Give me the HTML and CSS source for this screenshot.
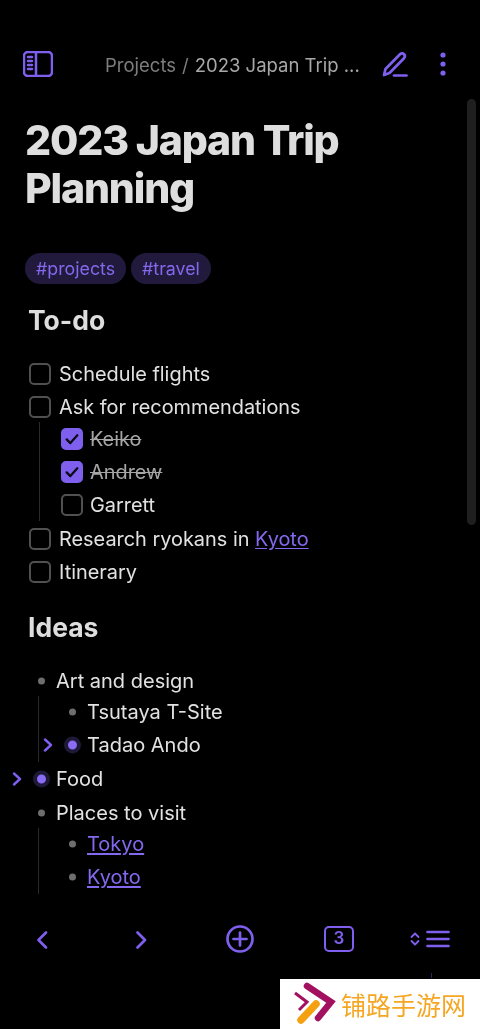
FILE: index.html
```html
<!DOCTYPE html>
<html lang="en">
<head>
<meta charset="utf-8">
<title>2023 Japan Trip Planning</title>
<link rel="stylesheet" href="styles.css">
</head>
<body>
<div class="app">
  <header class="topbar">
    <svg class="icon sidebar-icon" viewBox="0 0 30 26" fill="none"><rect x="1" y="1" width="28" height="24" rx="4"/><path d="M13 1v24M5 6h4M5 10h4M5 14h4M5 18h4" /></svg>
    <div class="crumbs"><span class="crumb-parent">Projects</span><span class="crumb-sep">/</span><span class="crumb-title">2023 Japan Trip ...</span></div>
    <svg class="icon pen-icon" viewBox="0 0 26 26" fill="none"><path d="M2 24l1.500-6L18 3.200c1.200-1.200 3-1.200 4 0 1 1 1 2.800 0 4L7.500 22z"/><path d="M12 24.500h12.500"/></svg>
    <svg class="more-icon" viewBox="0 0 6 24"><circle cx="3" cy="3" r="2.600"/><circle cx="3" cy="12" r="2.600"/><circle cx="3" cy="21" r="2.600"/></svg>
  </header>

  <main class="note">
    <h1>2023 Japan Trip Planning</h1>
    <div class="tags"><span class="tag">#projects</span><span class="tag">#travel</span></div>

    <h2 class="todo-h">To-do</h2>
    <ul class="tasks">
      <li class="task"><span class="box"></span>Schedule flights</li>
      <li class="task"><span class="box"></span>Ask for recommendations</li>
      <li>
        <ul class="tasks nested">
          <li class="task done"><span class="box checked"><svg viewBox="0 0 22 22" fill="none"><path d="M4.500 11.500l4.500 4.500 8.500-9.500"/></svg></span><s>Keiko</s></li>
          <li class="task done"><span class="box checked"><svg viewBox="0 0 22 22" fill="none"><path d="M4.500 11.500l4.500 4.500 8.500-9.500"/></svg></span><s>Andrew</s></li>
          <li class="task"><span class="box"></span>Garrett</li>
        </ul>
      </li>
      <li class="task"><span class="box"></span>Research ryokans in&nbsp;<a href="#">Kyoto</a></li>
      <li class="task"><span class="box"></span>Itinerary</li>
    </ul>

    <h2 class="ideas-h">Ideas</h2>
    <ul class="bullets">
      <li class="bullet"><span class="dot"></span>Art and design</li>
      <li>
        <ul class="bullets nested">
          <li class="bullet"><span class="dot"></span>Tsutaya T-Site</li>
          <li class="bullet folded"><svg class="chev" viewBox="0 0 10 14" fill="none"><path d="M2 1.500L8 7l-6 5.500"/></svg><span class="dot"></span>Tadao Ando</li>
        </ul>
      </li>
      <li class="bullet folded"><svg class="chev" viewBox="0 0 10 14" fill="none"><path d="M2 1.500L8 7l-6 5.500"/></svg><span class="dot"></span>Food</li>
      <li class="bullet"><span class="dot"></span>Places to visit</li>
      <li>
        <ul class="bullets nested">
          <li class="bullet"><span class="dot"></span><a href="#">Tokyo</a></li>
          <li class="bullet"><span class="dot"></span><a href="#">Kyoto</a></li>
        </ul>
      </li>
    </ul>
  </main>

  <nav class="bottombar">
    <svg class="icon nav-icon" viewBox="0 0 14 20" fill="none"><path d="M11 2.500L3.500 10l7.500 7.500"/></svg>
    <svg class="icon nav-icon" viewBox="0 0 14 20" fill="none"><path d="M3.500 2.500L11 10l-7.500 7.500"/></svg>
    <svg class="icon plus-icon" viewBox="0 0 28 28" fill="none"><circle cx="14" cy="14" r="12.500"/><path d="M14 7.500v13M7.500 14h13"/></svg>
    <span class="tabs-count">3</span>
    <div class="list-btn">
      <svg class="updown" viewBox="0 0 10 14" fill="none"><path d="M1.500 5L5 1.500 8.500 5M1.500 9L5 12.500 8.500 9"/></svg>
      <svg class="icon lines" viewBox="0 0 24 18" fill="none"><path d="M1.500 2h21M1.500 9h21M1.500 16h21"/></svg>
    </div>
  </nav>

  <div class="scrollbar"></div>

  <aside class="watermark">
    <span class="speck"></span>
    <svg class="logo" viewBox="0 0 44 44" fill="none"><path class="big" d="M14 4l24 16-13 16"/><path class="thin" d="M2 11l12 9-8 8"/><path class="bar" d="M8 38l15-16"/></svg>
    <span class="wm-text">铺路手游网</span>
  </aside>
</div>
</body>
</html>
```

FILE: styles.css
```css
* { box-sizing: border-box; }
html, body { margin: 0; padding: 0; background: #000; }
body { font-family: Inter, "Noto Sans", sans-serif; color: #e2e2e2; }
ul { list-style: none; margin: 0; padding: 0; }
a { color: #8468ee; text-decoration: underline; text-underline-offset: 2px; }
svg { display: block; }

.app { position: relative; width: 480px; height: 1029px; overflow: hidden; display: flex; flex-direction: column; filter: blur(0.4px); }

.icon { stroke: #7f5fee; stroke-width: 2.700; stroke-linecap: round; stroke-linejoin: round; }

.topbar { display: flex; align-items: center; height: 30px; margin-top: 49px; padding: 0 34px 0 23px; flex: none; }
.sidebar-icon { width: 30px; height: 26px; stroke-width: 2.500; }
.crumbs { margin: 1px 0 0 52px; font-size: 18.500px; display: flex; gap: 6px; white-space: nowrap; color: #a8a8a8; }
.crumb-parent, .crumb-sep { color: #7d7d7d; }
.pen-icon { width: 26px; height: 26px; margin-left: auto; margin-right: 1px; }
.more-icon { width: 6px; height: 24px; fill: #7f5fee; margin-left: 31px; }

.note { padding: 0 0 0 25px; flex: 1; }
h1 { margin: 37px 0 0; width: 400px; font-size: 41px; line-height: 48px; font-weight: 800; color: #dedede; letter-spacing: -1.170px; }
.tags { display: flex; gap: 5px; margin-top: 41px; }
.tag { height: 31px; line-height: 31px; padding: 0 11px; border-radius: 16px; background: #211a3c; color: #8468ee; font-size: 17.800px; }
h2 { margin: 0 0 0 3px; font-size: 26.500px; line-height: 34px; font-weight: 650; color: #dedede; }
.todo-h { margin-top: 19px; }
.ideas-h { margin-top: 22px; }

.tasks { margin: 20px 0 0 4px; font-size: 19.900px; }
.task { display: flex; align-items: center; height: 33px; }
.box { width: 22px; height: 22px; margin-right: 8px; border: 2px solid #505050; border-radius: 5px; flex: none; }
.box.checked { background: #7f5fee; border-color: #7f5fee; }
.box.checked svg { width: 18px; height: 18px; stroke: #0c0c14; stroke-width: 2.800; stroke-linecap: round; stroke-linejoin: round; }
.tasks.nested { margin: -1px 0 1px 10px; padding-left: 21px; border-left: 1px solid #2a2a2a; }
.tasks.nested .box { margin-right: 7px; }
.done { color: #a6a6a6; }

.bullets { margin: 20px 0 0 3px; font-size: 20px; }
.bullet { position: relative; display: flex; align-items: center; height: 34px; padding-left: 28px; }
.dot { position: absolute; left: 9.500px; top: 50%; transform: translateY(-50%); width: 7px; height: 7px; border-radius: 50%; background: #6e6e6e; }
.folded .dot { left: 4.500px; width: 17px; height: 17px; background: #8a6cf5; border: 4.500px solid #1f1938; }
.chev { position: absolute; left: -16px; top: 50%; transform: translateY(-50%); width: 10px; height: 14px; stroke: #7f5fee; stroke-width: 2.400; stroke-linecap: round; stroke-linejoin: round; }
.bullets.nested { margin: -2.500px 0 0.500px 10px; padding-left: 20px; border-left: 1px solid #2a2a2a; }
.nested .bullet { height: 33px; }

.bottombar { position: absolute; left: -7.500px; right: 0; top: 925px; height: 28px; display: grid; grid-template-columns: 99px 99px 99px 99px 1fr; align-items: center; justify-items: center; }
.nav-icon { width: 14px; height: 20px; margin-top: 1px; }
.plus-icon { width: 28px; height: 28px; }
.tabs-count { width: 30px; height: 26px; border: 2.400px solid #7f5fee; border-radius: 5px; color: #7f5fee; font-size: 17px; font-weight: 600; text-align: center; line-height: 21px; }
.list-btn { display: flex; align-items: center; gap: 6px; justify-self: end; padding-right: 30px; }
.updown { width: 10px; height: 14px; stroke: #7f5fee; stroke-width: 1.800; stroke-linecap: round; stroke-linejoin: round; }
.lines { width: 24px; height: 18px; }

.scrollbar { position: absolute; left: 467px; top: 99px; width: 9px; height: 426px; border-radius: 5px; background: #1f1f1f; }

.watermark { position: absolute; left: 280px; top: 979px; width: 200px; height: 50px; background: #fff; display: flex; align-items: center; padding-left: 13px; }
.speck { position: absolute; left: 151px; top: -6px; width: 1px; height: 5px; background: #2c2460; }
.logo { width: 44px; height: 44px; flex: none; }
.logo .big { stroke: #a3105f; stroke-width: 6.500; stroke-linecap: round; stroke-linejoin: miter; }
.logo .thin { stroke: #a3105f; stroke-width: 3; }
.logo .bar { stroke: #f5a00f; stroke-width: 7.500; stroke-linecap: round; }
.wm-text { margin-left: 4px; font-family: "Noto Sans CJK SC", sans-serif; font-size: 25px; color: #f5a623; white-space: nowrap; }
```
